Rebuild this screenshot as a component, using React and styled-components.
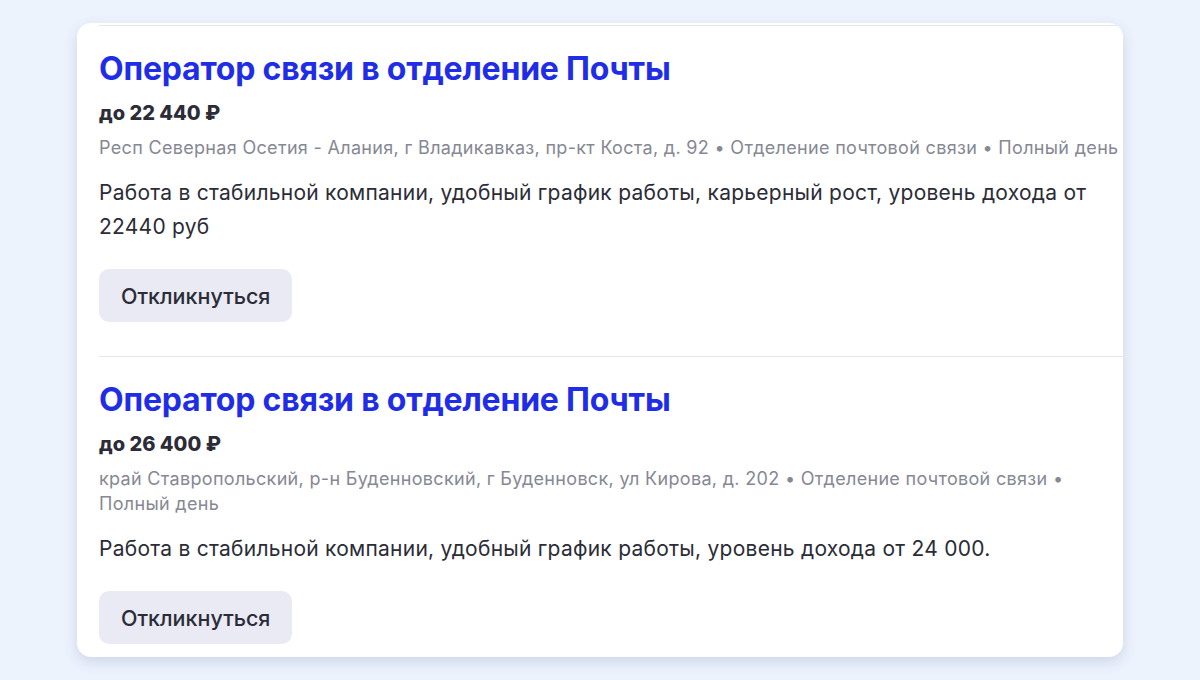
import styled, { createGlobalStyle } from 'styled-components';

const GlobalStyle = createGlobalStyle`
  html, body {
    margin: 0;
    padding: 0;
    background: #edf3fd;
  }
  body {
    font-family: Inter, 'Noto Sans', sans-serif;
    color: #2b2c37;
  }
`;

const Page = styled.div`
  width: 1200px;
  height: 680px;
  padding-top: 23px;
  box-sizing: border-box;
  display: flex;
  justify-content: center;
`;

const Card = styled.div`
  width: 1046px;
  height: 634px;
  box-sizing: border-box;
  background: #fff;
  border-radius: 14px;
  box-shadow: 0 5px 14px rgba(60, 80, 140, 0.18);
  padding: 2px 0 0 22px;
  overflow: hidden;
`;

const Vacancy = styled.div`
  border-top: 1px solid #e3e5f1;
  padding: 25px 0 34px;
`;

const Title = styled.a`
  display: block;
  font-size: 32px;
  line-height: 36px;
  font-weight: 700;
  color: #1f2ee6;
  letter-spacing: -0.2px;
  text-decoration: none;
`;

const Salary = styled.div`
  margin-top: 14px;
  font-size: 20px;
  line-height: 24px;
  font-weight: 800;
  color: #2b2c37;
`;

const Address = styled.div`
  margin-top: 10px;
  font-size: 18px;
  line-height: 25px;
  letter-spacing: 0.32px;
  color: #868894;
`;

const Description = styled.p`
  margin: 16px 0 0;
  font-size: 21px;
  line-height: 34px;
  letter-spacing: 0.25px;
  color: #2b2c37;
`;

const Button = styled.button`
  margin-top: 25px;
  height: 53px;
  padding: 0 22px;
  border: none;
  border-radius: 10px;
  background: #e9eaf3;
  font-family: Inter, sans-serif;
  font-size: 21.5px;
  font-weight: 500;
  color: #2b2c37;
  cursor: pointer;
`;

const vacancies = [
  {
    salary: 'до 22 440 ₽',
    address: 'Респ Северная Осетия - Алания, г Владикавказ, пр-кт Коста, д. 92 • Отделение почтовой связи • Полный день',
    text: 'Работа в стабильной компании, удобный график работы, карьерный рост, уровень дохода от 22440 руб',
  },
  {
    salary: 'до 26 400 ₽',
    address: 'край Ставропольский, р-н Буденновский, г Буденновск, ул Кирова, д. 202 • Отделение почтовой связи • Полный день',
    text: 'Работа в стабильной компании, удобный график работы, уровень дохода от 24 000.',
  },
];

export default function App() {
  return (
    <>
      <GlobalStyle />
      <Page>
        <Card>
          {vacancies.map((v) => (
            <Vacancy key={v.salary}>
              <Title href="#">Оператор связи в отделение Почты</Title>
              <Salary>{v.salary}</Salary>
              <Address>{v.address}</Address>
              <Description>{v.text}</Description>
              <Button type="button">Откликнуться</Button>
            </Vacancy>
          ))}
        </Card>
      </Page>
    </>
  );
}
